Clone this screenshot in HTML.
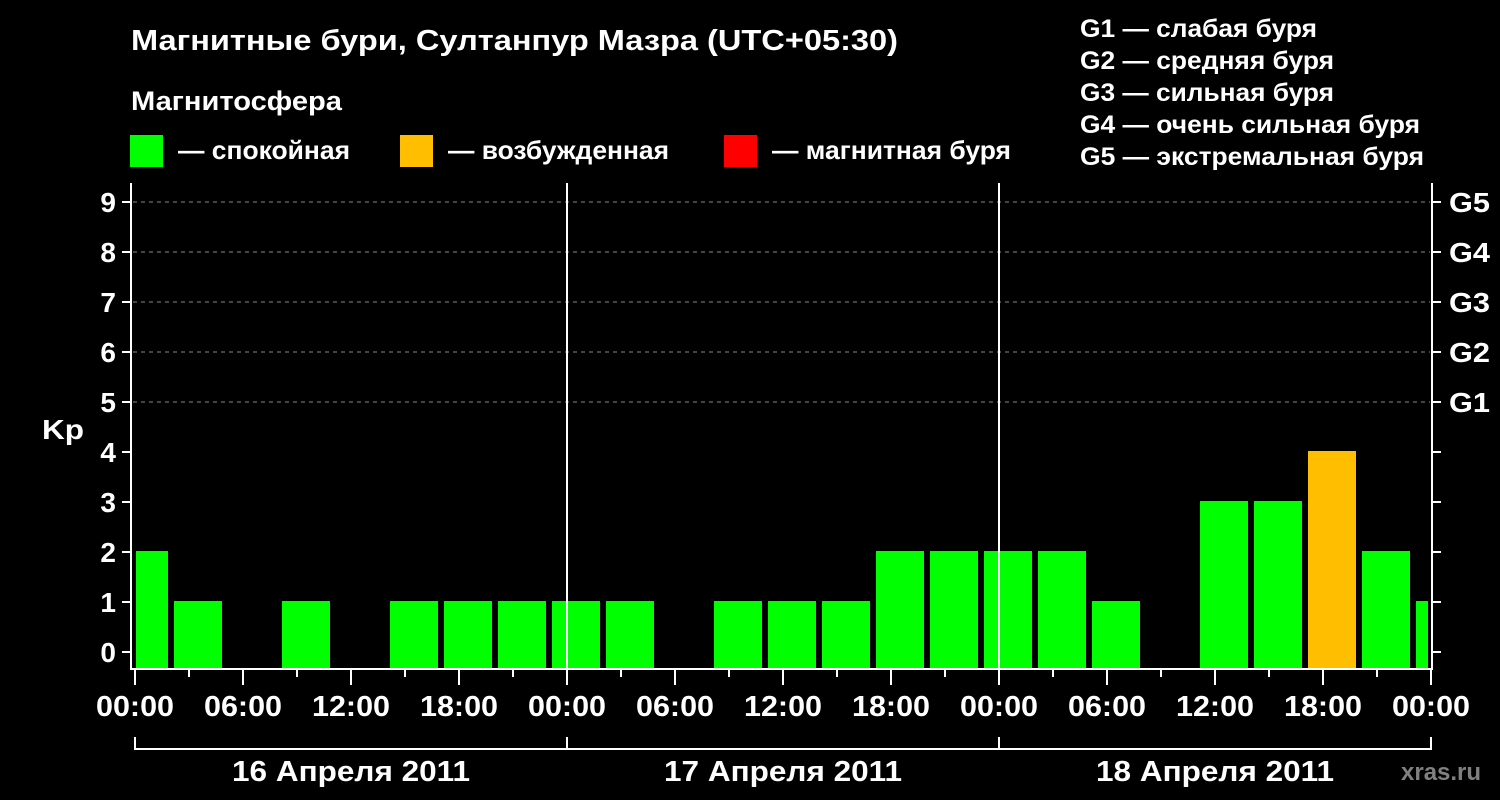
<!DOCTYPE html>
<html><head><meta charset="utf-8"><style>
html,body{margin:0;padding:0;background:#000;}
svg{display:block;}
text{font-family:"Liberation Sans",Arial,sans-serif;font-weight:bold;fill:#fff;}
</style></head><body>
<svg width="1500" height="800" viewBox="0 0 1500 800" xmlns="http://www.w3.org/2000/svg">
<rect width="1500" height="800" fill="#000"/>
<text x="131" y="50" font-size="29" textLength="767" lengthAdjust="spacingAndGlyphs">Магнитные бури, Султанпур Мазра (UTC+05:30)</text>
<text x="131" y="110" font-size="27" textLength="211" lengthAdjust="spacingAndGlyphs">Магнитосфера</text>
<rect x="130" y="135" width="33" height="32" fill="#00ff00"/>
<text x="178" y="159" font-size="26" textLength="172" lengthAdjust="spacingAndGlyphs">— спокойная</text>
<rect x="400" y="135" width="33" height="32" fill="#ffbf00"/>
<text x="448" y="159" font-size="26" textLength="221" lengthAdjust="spacingAndGlyphs">— возбужденная</text>
<rect x="724" y="135" width="33" height="32" fill="#ff0000"/>
<text x="772" y="159" font-size="26" textLength="239" lengthAdjust="spacingAndGlyphs">— магнитная буря</text>
<g font-size="25">
<text x="1080" y="37" textLength="237" lengthAdjust="spacingAndGlyphs">G1 — слабая буря</text>
<text x="1080" y="69" textLength="254" lengthAdjust="spacingAndGlyphs">G2 — средняя буря</text>
<text x="1080" y="101" textLength="254" lengthAdjust="spacingAndGlyphs">G3 — сильная буря</text>
<text x="1080" y="133" textLength="340" lengthAdjust="spacingAndGlyphs">G4 — очень сильная буря</text>
<text x="1080" y="165" textLength="344" lengthAdjust="spacingAndGlyphs">G5 — экстремальная буря</text>
</g>
<g stroke="#888" stroke-width="1" stroke-dasharray="4,4">
<line x1="133" y1="202" x2="1430" y2="202"/>
<line x1="133" y1="252" x2="1430" y2="252"/>
<line x1="133" y1="302" x2="1430" y2="302"/>
<line x1="133" y1="352" x2="1430" y2="352"/>
<line x1="133" y1="402" x2="1430" y2="402"/>
</g>
<g fill="#00ff00">
<rect x="136" y="551" width="32" height="117"/>
<rect x="174" y="601" width="48" height="67"/>
<rect x="282" y="601" width="48" height="67"/>
<rect x="390" y="601" width="48" height="67"/>
<rect x="444" y="601" width="48" height="67"/>
<rect x="498" y="601" width="48" height="67"/>
<rect x="552" y="601" width="48" height="67"/>
<rect x="606" y="601" width="48" height="67"/>
<rect x="714" y="601" width="48" height="67"/>
<rect x="768" y="601" width="48" height="67"/>
<rect x="822" y="601" width="48" height="67"/>
<rect x="876" y="551" width="48" height="117"/>
<rect x="930" y="551" width="48" height="117"/>
<rect x="984" y="551" width="48" height="117"/>
<rect x="1038" y="551" width="48" height="117"/>
<rect x="1092" y="601" width="48" height="67"/>
<rect x="1200" y="501" width="48" height="167"/>
<rect x="1254" y="501" width="48" height="167"/>
<rect x="1362" y="551" width="48" height="117"/>
<rect x="1416" y="601" width="12" height="67"/>
</g>
<rect x="1308" y="451" width="48" height="217" fill="#ffbf00"/>
<g stroke="#fff" stroke-width="2" fill="none">
<line x1="131" y1="183" x2="131" y2="669"/>
<line x1="1432" y1="183" x2="1432" y2="669"/>
<line x1="130" y1="669" x2="1433" y2="669"/>
<line x1="567" y1="183" x2="567" y2="669"/>
<line x1="999" y1="183" x2="999" y2="669"/>
<path d="M122 202H131M122 252H131M122 302H131M122 352H131M122 402H131M122 452H131M122 502H131M122 552H131M122 602H131M122 652H131"/>
<path d="M1432 202H1441M1432 252H1441M1432 302H1441M1432 352H1441M1432 402H1441M1432 452H1441M1432 502H1441M1432 552H1441M1432 602H1441M1432 652H1441"/>
<path d="M135 669V685M243 669V685M351 669V685M459 669V685M567 669V685M675 669V685M783 669V685M891 669V685M999 669V685M1107 669V685M1215 669V685M1323 669V685M1431 669V685"/>
<path d="M189 669V677M297 669V677M405 669V677M513 669V677M621 669V677M729 669V677M837 669V677M945 669V677M1053 669V677M1161 669V677M1269 669V677M1377 669V677"/>
<path d="M135 737V749H1431V737M567 737V749M999 737V749"/>
</g>
<g font-size="28" text-anchor="end">
<text x="116" y="212">9</text><text x="116" y="262">8</text><text x="116" y="312">7</text>
<text x="116" y="362">6</text><text x="116" y="412">5</text><text x="116" y="462">4</text>
<text x="116" y="512">3</text><text x="116" y="562">2</text><text x="116" y="612">1</text>
<text x="116" y="662">0</text>
</g>
<text x="42" y="439" font-size="28" textLength="42" lengthAdjust="spacingAndGlyphs">Kp</text>
<g font-size="28">
<text x="1449" y="212" textLength="41" lengthAdjust="spacingAndGlyphs">G5</text>
<text x="1449" y="262" textLength="41" lengthAdjust="spacingAndGlyphs">G4</text>
<text x="1449" y="312" textLength="41" lengthAdjust="spacingAndGlyphs">G3</text>
<text x="1449" y="362" textLength="41" lengthAdjust="spacingAndGlyphs">G2</text>
<text x="1449" y="412" textLength="41" lengthAdjust="spacingAndGlyphs">G1</text>
</g>
<g font-size="29">
<text x="96" y="716" textLength="78" lengthAdjust="spacingAndGlyphs">00:00</text>
<text x="204" y="716" textLength="78" lengthAdjust="spacingAndGlyphs">06:00</text>
<text x="312" y="716" textLength="78" lengthAdjust="spacingAndGlyphs">12:00</text>
<text x="420" y="716" textLength="78" lengthAdjust="spacingAndGlyphs">18:00</text>
<text x="528" y="716" textLength="78" lengthAdjust="spacingAndGlyphs">00:00</text>
<text x="636" y="716" textLength="78" lengthAdjust="spacingAndGlyphs">06:00</text>
<text x="744" y="716" textLength="78" lengthAdjust="spacingAndGlyphs">12:00</text>
<text x="852" y="716" textLength="78" lengthAdjust="spacingAndGlyphs">18:00</text>
<text x="960" y="716" textLength="78" lengthAdjust="spacingAndGlyphs">00:00</text>
<text x="1068" y="716" textLength="78" lengthAdjust="spacingAndGlyphs">06:00</text>
<text x="1176" y="716" textLength="78" lengthAdjust="spacingAndGlyphs">12:00</text>
<text x="1284" y="716" textLength="78" lengthAdjust="spacingAndGlyphs">18:00</text>
<text x="1392" y="716" textLength="78" lengthAdjust="spacingAndGlyphs">00:00</text>
<text x="232" y="781" textLength="238" lengthAdjust="spacingAndGlyphs">16 Апреля 2011</text>
<text x="664" y="781" textLength="238" lengthAdjust="spacingAndGlyphs">17 Апреля 2011</text>
<text x="1096" y="781" textLength="238" lengthAdjust="spacingAndGlyphs">18 Апреля 2011</text>
</g>
<text x="1401" y="780" font-size="24" style="fill:#808080">xras.ru</text>
</svg>
</body></html>
